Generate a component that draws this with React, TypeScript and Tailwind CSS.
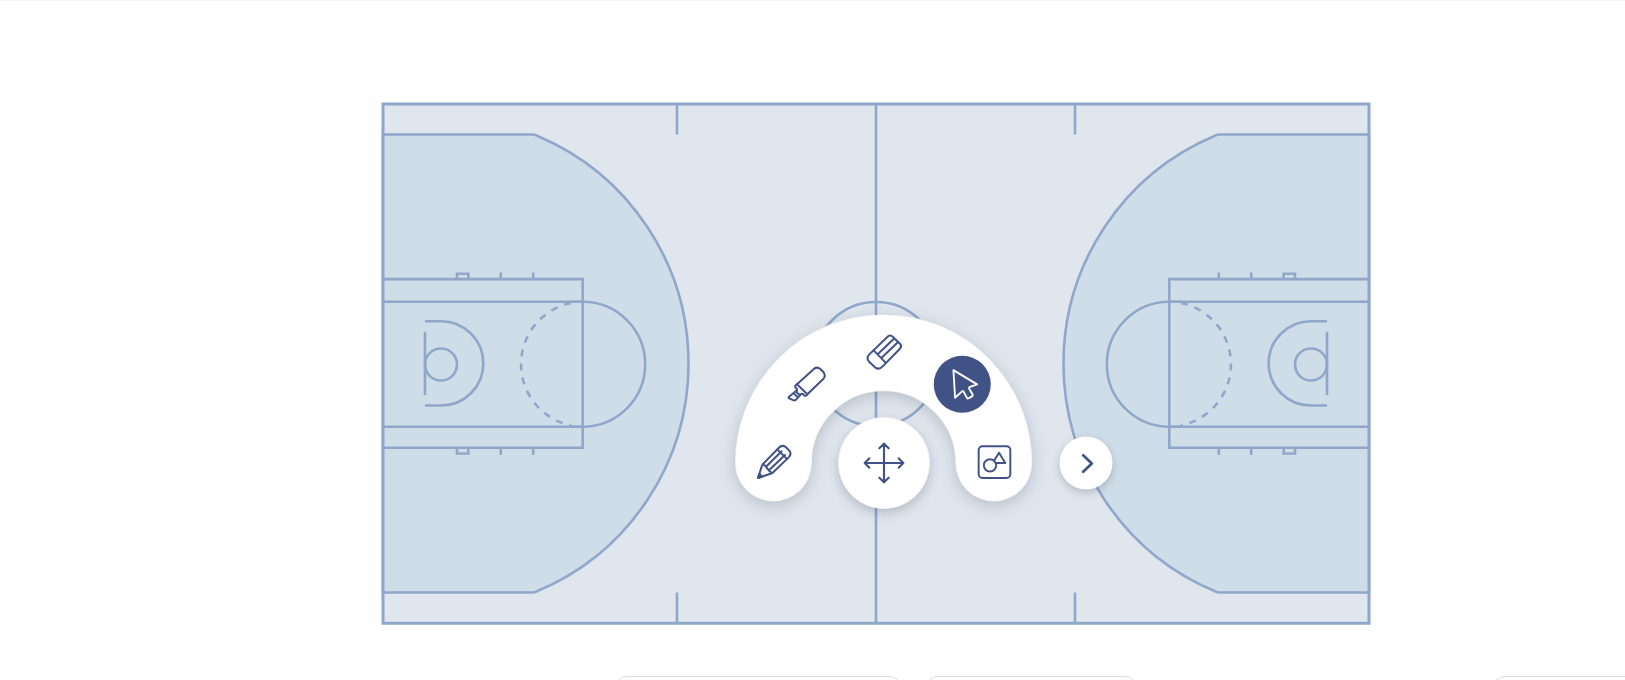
import type { ReactNode } from "react";

function HalfCourt() {
  return (
    <>
      <path
        d="M2 33H151Q153.500 33 156 34.200A247 247 0 0 1 156 489.800Q153.500 491 151 491H2Z"
        fill="#cfdde9"
      />
      <path d="M2 177.6H201.7V346.3H2M2 200.3H201.7M2 325.2H201.7" />
      <path d="M201.7 200.3A62.4 62.4 0 0 1 201.7 325.2" />
      <path d="M201.7 200.3H190M201.7 325.2H190" />
      <path d="M190 201.6A62.4 62.4 0 0 0 190 323.9" strokeDasharray="7 7.1" />
      <path d="M76 178.5V172.2H87.3V178.5M119.8 171V178M152.2 171V178" />
      <path d="M76 346V352H87.3V346M119.8 346V353.2M152.2 346V353.2" />
      <path d="M44 219.7H60A42.15 42.15 0 0 1 102.3 261.9A42.15 42.15 0 0 1 60 304H44M44 230.3V293.7" />
      <circle cx="60" cy="263" r="16" />
    </>
  );
}

function Court() {
  return (
    <svg
      width="990"
      height="523"
      viewBox="0 -0.5 990 523"
      fill="none"
      stroke="#90a7ca"
      strokeWidth="2.6"
      className="overflow-visible"
    >
      <rect x="2" y="2.5" width="986" height="519.2" fill="#e0e6ee" />
      <path d="M495 2V522M296 2V33M694 2V33M296 491V522M694 491V522" />
      <circle cx="495" cy="262.5" r="62" />
      <HalfCourt />
      <g transform="translate(990 0) scale(-1 1)">
        <HalfCourt />
      </g>
      <rect x="2" y="2.5" width="986" height="519.2" />
    </svg>
  );
}

function Icon({ children, width = 6 }: { children: ReactNode; width?: number }) {
  return (
    <svg
      width="44"
      height="44"
      viewBox="0 0 132 132"
      fill="none"
      stroke="currentColor"
      strokeWidth={width}
      strokeLinecap="round"
      strokeLinejoin="round"
      className="shrink-0"
    >
      {children}
    </svg>
  );
}

function Tool({ label, place, children }: { label: string; place: string; children: ReactNode }) {
  return (
    <button
      aria-label={label}
      className={`absolute flex -translate-x-1/2 -translate-y-1/2 items-center justify-center rounded-full ${place}`}
    >
      {children}
    </button>
  );
}

function RadialMenu() {
  return (
    <div className="absolute left-[735px] top-[314px] h-[188px] w-[378px] text-[#415287]">
      <svg
        width="298"
        height="188"
        viewBox="0 0.2 298 188"
        fill="none"
        className="absolute left-0 top-0 overflow-visible drop-shadow-[0_4px_8px_rgba(40,50,70,0.22)]"
      >
        <path d="M38.4 149.2A110 110 0 0 1 258.8 149.2" stroke="#f5f5f5" strokeWidth="76.8" strokeLinecap="round" />
        <path d="M38.4 149.2A110 110 0 0 1 258.8 149.2" stroke="#ffffff" strokeWidth="74.8" strokeLinecap="round" />
      </svg>

      <Tool label="Pencil" place="left-[39px] top-[147.5px] size-11">
        <Icon width={6}>
          <path d="M18 114L29 80Q30 75 34 71L80 24Q90 13 101 21L112 32Q120 42 110 52L62 98Q58 101 53 102Z" />
          <path d="M33 72L41 79L51 92L60 99M42 80L89 34M51 91L99 45M76 28L105 57" />
          <path d="M18 114L22 101L31 110Z" fill="currentColor" />
        </Icon>
      </Tool>
      <Tool label="Marker" place="left-[71.5px] top-[70px] size-11">
        <Icon>
          <path d="M36 67L84 23Q95 12 106 21L115 30Q124 41 114 52L67 97Z" />
          <path d="M36 67Q29 70 31 76L36 81L35 91L43 98L53 95L58 101Q63 103 67 97" />
          <path d="M34 86L12 104Q9 108 14 110L26 115Q31 116 34 112L48 97M26 94L37 104" />
        </Icon>
      </Tool>
      <Tool label="Eraser" place="left-[149px] top-[38px] size-11">
        <Icon>
          <path d="M76 21Q84 12 92 20L114 41Q121 49 113 57L62 109Q51 121 39 112L22 96Q11 84 22 73Z" />
          <path d="M35 61L70 97M47 73L95 27M58 84L106 38" />
        </Icon>
      </Tool>
      <Tool label="Select" place="left-[227.25px] top-[70.25px] size-[56.5px] bg-[#415287] text-white">
        <Icon width={5.6}>
          <path d="M38 22L109 65L86 73Q84 75 85 77L96 96Q96 99 94 101L83 107Q80 108 79 106L68 86Q66 84 64 86L43 105Z" />
        </Icon>
      </Tool>
      <Tool label="Shapes" place="left-[260px] top-[148px] size-11">
        <Icon width={5.8}>
          <rect x="17" y="19" width="95" height="95" rx="11" />
          <circle cx="51" cy="76" r="18.5" />
          <path d="M64 61L78 38L97 69H69" />
        </Icon>
      </Tool>
      <Tool
        label="Move"
        place="left-[148.5px] top-[148.5px] size-[92px] border border-[#f5f5f5] bg-white shadow-[0_4px_12px_rgba(40,50,70,0.24)]"
      >
        <Icon width={6.4}>
          <path d="M66 8V124M8 66H124M52 22L66 8L80 22M52 110L66 124L80 110M22 52L8 66L22 80M110 52L124 66L110 80" />
        </Icon>
      </Tool>
      <Tool
        label="Next"
        place="left-[351px] top-[149px] size-[53px] bg-white shadow-[0_3px_8px_rgba(40,50,70,0.24)]"
      >
        <Icon width={8}>
          <path d="M56 41L82 66L56 91" />
        </Icon>
      </Tool>
    </div>
  );
}

export default function App() {
  return (
    <main className="flex h-[680px] w-full flex-col overflow-hidden border-t border-[#f3f3f3] bg-[#fefefe]">
      <section className="h-[675px] shrink-0 pl-[381px] pt-[100px]">
        <Court />
      </section>
      <footer className="flex shrink-0 pl-[615px]">
        <div className="h-12 w-[286px] shrink-0 rounded-xl border border-[#dcdcdc] bg-white" />
        <div className="ml-[25px] h-12 w-[211px] shrink-0 rounded-xl border border-[#dcdcdc] bg-white" />
        <div className="ml-[356px] h-12 w-[200px] shrink-0 rounded-xl border border-[#dcdcdc] bg-white" />
      </footer>
      <RadialMenu />
    </main>
  );
}
